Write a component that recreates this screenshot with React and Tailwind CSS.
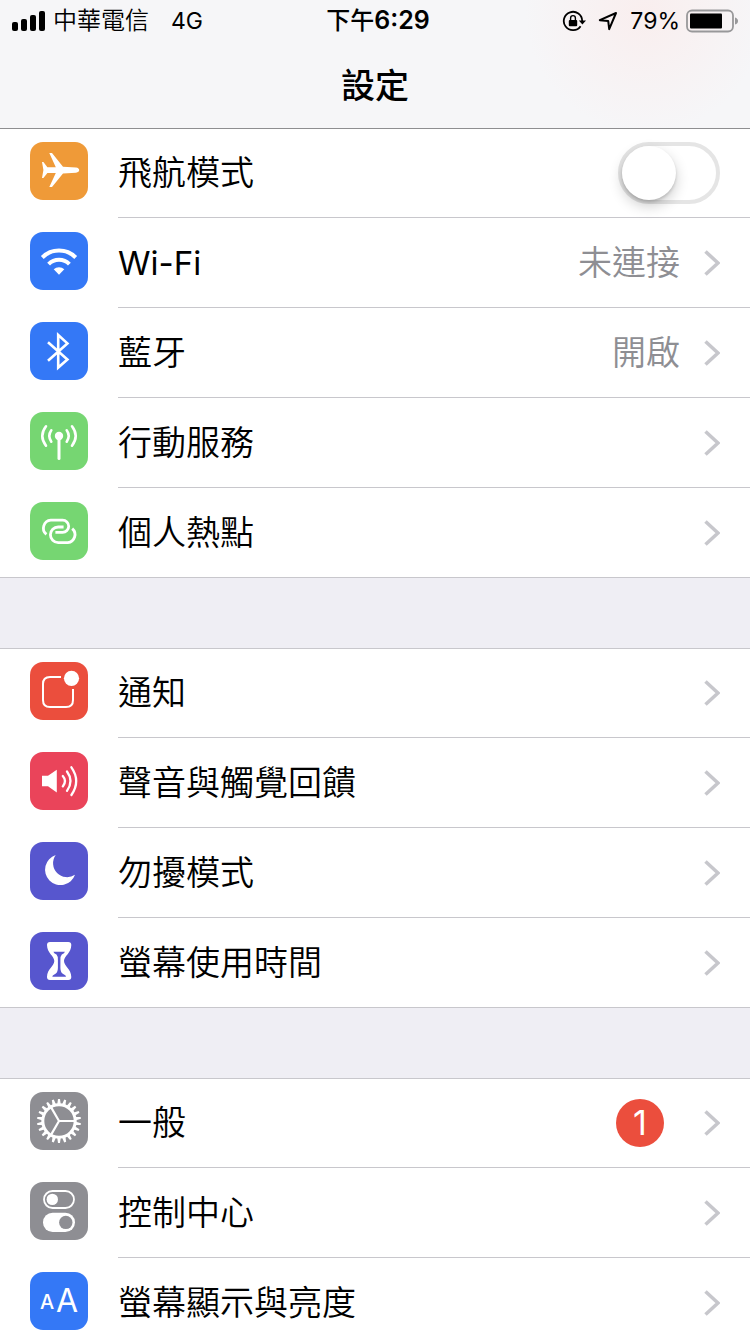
import { useState } from 'react';

const AirplaneIcon = () => (
  <path
    fill="white"
    d="M12 20h1.4l4 5.2h8.4L19.3 11h2.7L33 24.8l13 .6q3.2.5 3.2 2.7t-3.2 2.7l-13 .6L22 45h-2.7L25.8 31h-8.4L13.4 36H12l1.4-8z"
  />
);

const WifiIcon = () => (
  <>
    <g fill="none" stroke="white" strokeWidth="4">
      <path d="M12.3 25.5A23.7 23.7 0 0 1 45.7 25.5" />
      <path d="M18.6 32.1A14.7 14.7 0 0 1 39.4 32.1" />
    </g>
    <path fill="white" d="M29 42.7l-5.3-5.4a7.6 7.6 0 0 1 10.6 0z" />
  </>
);

const BluetoothIcon = () => (
  <path
    fill="none"
    stroke="white"
    strokeWidth="2.6"
    d="M18 20.2L37.4 37.6L28.2 45.6V13L37.4 21.4L18 38.8"
  />
);

const CellularIcon = () => (
  <>
    <circle cx="29" cy="24" r="4.2" fill="white" />
    <g fill="none" stroke="white" strokeWidth="2.6" strokeLinecap="round">
      <path d="M29 24V46.4" strokeWidth="3" />
      <path d="M21.3 18.3Q17.3 24 21.3 29.7M36.7 18.3Q40.7 24 36.7 29.7" />
      <path d="M16 14.3Q8.6 24 16 33.7M42 14.3Q49.4 24 42 33.7" />
    </g>
  </>
);

const HotspotIcon = () => (
  <g fill="none" stroke="white" strokeWidth="2.8">
    <path d="M16.4 32.4A8 8 0 0 1 20.8 18.2H32.6A6.1 6.1 0 0 1 32.6 30.4H25.4" />
    <path d="M33.6 25H28.2A7.8 7.8 0 0 0 28.2 40.6H37.8A8 8 0 0 0 42.2 26.6" />
  </g>
);

const NotificationIcon = () => (
  <>
    <path
      fill="none"
      stroke="white"
      strokeWidth="2"
      d="M31 15H20Q13 15 13 22V38Q13 45 20 45H36Q43 45 43 38V27"
    />
    <circle cx="41.5" cy="16.3" r="7.6" fill="white" />
  </>
);

const SoundIcon = () => (
  <>
    <path fill="white" d="M12 23.7h6l8.8-5.9v22.6L18 34.3h-6z" />
    <g fill="none" stroke="white" strokeWidth="2.3" strokeLinecap="round">
      <path d="M32.8 24Q37.2 29 32.8 34.4" />
      <path d="M37 19.5Q44 29 37 38.8" />
      <path d="M41.4 15.3Q51 29 41.4 43" />
    </g>
  </>
);

const MoonIcon = () => (
  <path fill="white" d="M25.7 13A15.4 15.4 0 1 0 45 32.7A14 14 0 0 1 25.7 13z" />
);

const HourglassIcon = () => (
  <>
    <path
      fill="white"
      d="M20 10H38.3Q41.3 10 41.3 13C41.3 21 34 24 34 29C34 34 41.3 37 41.3 45Q41.3 48 38.3 48H20Q17 48 17 45C17 37 24.3 34 24.3 29C24.3 24 17 21 17 13Q17 10 20 10z"
    />
    <path
      fill="#5756ce"
      d="M23.4 19.8H34.9Q34.6 21.2 31.8 22.6Q30.4 24 30.4 28V36Q30.4 41 34 42.6Q36 43.4 36 44.8H22.3Q22.3 43.4 24.3 42.6Q27.9 41 27.9 36V28Q27.9 24 26.5 22.6Q23.7 21.2 23.4 19.8z"
    />
  </>
);

const teeth = Array.from({ length: 22 }, (_, i) => (i * 360) / 22);

const GearIcon = () => (
  <g fill="none" stroke="white">
    <circle cx="29" cy="29" r="16.2" strokeWidth="3" />
    {teeth.map((angle) => (
      <path key={angle} d="M27.3 12L28 7H30L30.7 12z" fill="white" stroke="none" transform={`rotate(${angle} 29 29)`} />
    ))}
    <path strokeWidth="2.2" d="M29 29H45M29 29L21 15.1M29 29L21 42.9" />
  </g>
);

const ControlIcon = () => (
  <>
    <rect x="14" y="9" width="30" height="17" rx="8.5" fill="none" stroke="white" strokeWidth="1.8" />
    <circle cx="22.3" cy="17.4" r="5.7" fill="white" />
    <rect x="13" y="30.7" width="32" height="19.3" rx="9.6" fill="white" />
    <circle cx="35.8" cy="40.4" r="6.7" fill="#8e8e93" />
  </>
);

const DisplayIcon = () => (
  <g fill="white" fontFamily="Inter, sans-serif">
    <text x="10" y="37" fontSize="20" fontWeight="500">A</text>
    <text x="26" y="40" fontSize="32" fontWeight="400">A</text>
  </g>
);

const groups = [
  [
    { label: '飛航模式', color: 'bg-[#ef9a38]', Icon: AirplaneIcon, toggle: true },
    { label: 'Wi-Fi', latin: true, color: 'bg-[#3478f6]', Icon: WifiIcon, value: '未連接' },
    { label: '藍牙', color: 'bg-[#3478f6]', Icon: BluetoothIcon, value: '開啟' },
    { label: '行動服務', color: 'bg-[#76d672]', Icon: CellularIcon },
    { label: '個人熱點', color: 'bg-[#76d672]', Icon: HotspotIcon },
  ],
  [
    { label: '通知', color: 'bg-[#eb4e3d]', Icon: NotificationIcon },
    { label: '聲音與觸覺回饋', color: 'bg-[#ea445a]', Icon: SoundIcon },
    { label: '勿擾模式', color: 'bg-[#5756ce]', Icon: MoonIcon },
    { label: '螢幕使用時間', color: 'bg-[#5756ce]', Icon: HourglassIcon },
  ],
  [
    { label: '一般', color: 'bg-[#8e8e93]', Icon: GearIcon, badge: 1 },
    { label: '控制中心', color: 'bg-[#8e8e93]', Icon: ControlIcon },
    { label: '螢幕顯示與亮度', color: 'bg-[#3478f6]', Icon: DisplayIcon },
  ],
];

const StatusBar = () => (
  <div className="grid h-[42px] grid-cols-[1fr_auto_1fr] items-center px-3 text-2xl">
    <div className="flex items-center">
      <svg className="mr-2 h-5 w-[33px]" viewBox="0 0 33 20">
        <rect x="0" y="11" width="6" height="9" rx="2" />
        <rect x="9" y="8" width="6" height="12" rx="2" />
        <rect x="18" y="4" width="6" height="16" rx="2" />
        <rect x="27" y="0" width="6" height="20" rx="2" />
      </svg>
      <span className="font-[350]">中華電信</span>
      <span className="ml-[22px] text-[23px]">4G</span>
    </div>
    <div className="pl-1.5 text-[25px] font-semibold">
      <span className="text-2xl font-medium">下午</span>6:29
    </div>
    <div className="flex items-center justify-end">
      <svg className="mr-3 h-6 w-6" viewBox="0 0 24 24">
        <path d="M18.6 17.2A9.2 9.2 0 1 1 20.2 12" fill="none" stroke="black" strokeWidth="1.8" />
        <path d="M16.8 11.4H24L20.4 15.6z" />
        <rect x="6.8" y="11" width="8.4" height="6.2" rx="1" />
        <path d="M8.6 11.5V9a2.4 2.4 0 0 1 4.8 0V11.5" fill="none" stroke="black" strokeWidth="1.4" />
      </svg>
      <svg className="mr-3 h-5 w-5" viewBox="0 0 20 20">
        <path d="M1.8 9.2L18 2L11.2 18.2L10.2 9.9z" fill="none" stroke="black" strokeWidth="2" strokeLinejoin="round" />
      </svg>
      <span className="text-[23px]">79%</span>
      <svg className="ml-1.5 h-6 w-[52px]" viewBox="0 0 52 24">
        <rect x="1" y="1.5" width="46" height="21" rx="5" fill="none" stroke="#98989a" strokeWidth="1.8" />
        <rect x="4" y="4.5" width="32" height="15" rx="1" />
        <path d="M49 8.5Q52 9.5 52 12T49 15.5z" fill="#98989a" />
      </svg>
    </div>
  </div>
);

const Chevron = () => (
  <svg className="h-7 w-4 shrink-0" viewBox="0 0 16 28">
    <path d="M1.5 2.5L14 14L1.5 25.5" fill="none" stroke="#c7c7cc" strokeWidth="3.6" />
  </svg>
);

const Row = ({ item, first, last }) => {
  const [on, setOn] = useState(false);
  const { label, latin, color, Icon, toggle, value, badge } = item;
  const Tag = toggle ? 'label' : 'a';

  return (
    <li className={last ? 'border-b border-[#c8c7cc]' : ''}>
      <Tag href={toggle ? undefined : '#'} className="flex pl-[30px]">
        <span className={`${first ? 'mt-[13px]' : 'mt-3.5'} mr-[30px] size-[58px] shrink-0 rounded-[13px] ${color}`}>
          <svg viewBox="0 0 58 58" className="size-full" aria-hidden="true">
            <Icon />
          </svg>
        </span>
        <span
          className={`flex flex-1 items-center pr-[30px] ${first || last ? 'h-[89px]' : 'h-[90px]'} ${last ? '' : 'border-b border-[#c8c7cc]'}`}
        >
          <span className={`flex-1 ${latin ? 'text-[33px] font-normal' : ''}`}>{label}</span>
          {value && <span className="mr-6 text-[#8e8e93]">{value}</span>}
          {badge && (
            <span className="mr-10 flex size-12 items-center justify-center rounded-full bg-[#eb4e3d] font-normal text-white">
              {badge}
            </span>
          )}
          {toggle ? (
            <input
              type="checkbox"
              role="switch"
              checked={on}
              onChange={() => setOn(!on)}
              className="h-[62px] w-[102px] appearance-none rounded-full border-4 border-[#e5e5e5] bg-white before:block before:size-[54px] before:rounded-full before:bg-white before:shadow-[0_6px_14px_rgba(0,0,0,0.2),0_2px_3px_rgba(0,0,0,0.15)] checked:border-[#76d672] checked:bg-[#76d672] checked:before:ml-10"
            />
          ) : (
            <Chevron />
          )}
        </span>
      </Tag>
    </li>
  );
};

const App = () => {
  return (
    <div className="h-screen overflow-hidden bg-[#efeef4] font-['Inter','Noto_Sans_CJK_TC',sans-serif] text-black">
      <header className="border-b border-[#8e8e90] bg-[#f6f6f8] bg-[radial-gradient(circle_at_86%_10%,#f9eeee,#f6f6f8_120px)]">
        <StatusBar />
        <h1 className="flex h-[86px] items-center justify-center text-[34px] font-medium">設定</h1>
      </header>
      <main className="flex flex-col gap-[70px] text-[34px] leading-[48px] font-[350]">
        {groups.map((items, g) => (
          <ul key={g} className={`bg-white ${g > 0 ? 'border-t border-[#c8c7cc]' : ''}`}>
            {items.map((item, i) => (
              <Row key={item.label} item={item} first={i === 0} last={i === items.length - 1} />
            ))}
          </ul>
        ))}
      </main>
    </div>
  );
};

export default App;
